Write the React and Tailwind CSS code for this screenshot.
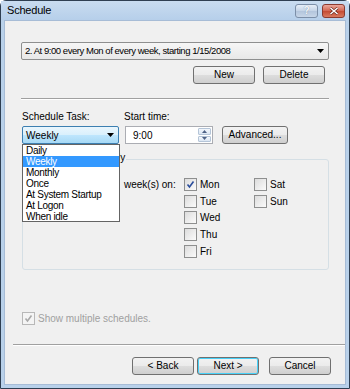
import React from "react";

const btn =
  "h-[18px] rounded-[3px] border border-[#707070] bg-[linear-gradient(#f2f2f2_0%,#ebebeb_50%,#dddddd_51%,#cfcfcf_100%)] text-[10px] text-black flex items-center justify-center leading-none";

function Check({ checked, disabled }) {
  return (
    <div
      className={
        "w-[13px] h-[13px] shrink-0 border flex items-center justify-center " +
        (disabled
          ? "border-[#b8b8b8] bg-[#f4f4f4]"
          : "border-[#8e8f8f] bg-[linear-gradient(135deg,#dcdcdc,#fbfbfb)]")
      }
    >
      {checked && (
        <svg width="9" height="9" viewBox="0 0 9 9">
          <path
            d="M1.5 4.5 L3.5 7 L7.5 1.5"
            fill="none"
            stroke={disabled ? "#a8a8a8" : "#2a4d9c"}
            strokeWidth="1.6"
          />
        </svg>
      )}
    </div>
  );
}

function Day({ label, checked }) {
  return (
    <div className="flex items-center h-[16.75px] gap-[3px]">
      <Check checked={checked} />
      <span>{label}</span>
    </div>
  );
}

export default function App() {
  const items = ["Daily", "Weekly", "Monthly", "Once", "At System Startup", "At Logon", "When idle"];
  return (
    <div
      className="w-[350px] h-[389px] bg-[#b9d1ea] border border-[#2f3f52] rounded-t-[6px] flex flex-col text-[10px] text-black"
      style={{ fontFamily: '"Liberation Sans", Arial, sans-serif' }}
    >
      {/* title bar */}
      <div className="h-[19px] shrink-0 flex items-center pl-[6px] pr-[4px] bg-[linear-gradient(#c9dcf0,#b6cfea)]">
        <span className="text-[11px] tracking-[-0.2px] text-black">Schedule</span>
        <div className="ml-auto flex gap-[4px] items-center">
          <div className="w-[23px] h-[14px] rounded-[3px] border border-[#7c8fa8] bg-[linear-gradient(#e6eef8,#c4d3e6_50%,#b3c5dc_51%,#c7d6e8)] flex items-center justify-center text-[10px] font-bold text-[#f4f7fb] leading-none" style={{ textShadow: "0 0 1px #6a7d95" }}>
            ?
          </div>
          <div className="w-[23px] h-[14px] rounded-[3px] border border-[#8b3a2f] bg-[linear-gradient(#eba89c,#d2644f_50%,#c44a32_51%,#d97a5f)] flex items-center justify-center">
            <svg width="10" height="8" viewBox="0 0 10 8">
              <path d="M1.5 1 L8.5 7 M8.5 1 L1.5 7" stroke="#5a1a10" strokeWidth="2.6" />
              <path d="M1.5 1 L8.5 7 M8.5 1 L1.5 7" stroke="#ffffff" strokeWidth="1.6" />
            </svg>
          </div>
        </div>
      </div>

      {/* client */}
      <div className="flex-1 mx-[3px] mb-[3px] bg-[#f0f0f0] border border-[#a7bcd6] flex flex-col relative">
        <div className="px-[16px] flex flex-col">
          {/* combo */}
          <div className="mt-[21px] h-[18px] border border-[#8e8f8f] rounded-[2px] bg-[linear-gradient(#f6f6f6,#e8e8e8)] flex items-center pl-[3px] pr-[4px]">
            <span className="text-[9.5px] tracking-[-0.45px]">2. At 9:00 every Mon of every week, starting 1/15/2008</span>
            <svg className="ml-auto" width="7" height="4" viewBox="0 0 7 4">
              <path d="M0 0 L7 0 L3.5 4 Z" fill="#000" />
            </svg>
          </div>

          {/* New / Delete */}
          <div className="mt-[6px] flex justify-end gap-[8px] pr-[4px]">
            <div className={btn + " w-[62px]"}>New</div>
            <div className={btn + " w-[62px]"}>Delete</div>
          </div>

          {/* separator */}
          <div className="mt-[14px] h-[2px] border-t border-[#a0a0a0] border-b border-b-white" />

          {/* labels */}
          <div className="mt-[10px] flex h-[13px] items-center">
            <span className="w-[103px] pl-[1px]">Schedule Task:</span>
            <span>Start time:</span>
          </div>

          {/* controls */}
          <div className="mt-[3px] flex items-center h-[18px]">
            <div className="w-[97px] h-[18px] ml-[1px] border border-[#3c7fb1] rounded-[2px] bg-[linear-gradient(#eaf6fd,#d9f0fc_50%,#bee6fd_51%,#a7d9f5)] flex items-center pl-[3px] pr-[4px]">
              <span>Weekly</span>
              <svg className="ml-auto" width="7" height="4" viewBox="0 0 7 4">
                <path d="M0 0 L7 0 L3.5 4 Z" fill="#000" />
              </svg>
            </div>
            <div className="ml-[6px] w-[88px] h-[18px] border border-[#abadb3] bg-white flex items-center">
              <span className="ml-[7px]">9:00</span>
              <div className="ml-auto mr-[1px] w-[13px] h-[14px] flex flex-col gap-[1px]">
                <div className="flex-1 border border-[#b5c5d8] rounded-[1px] bg-[linear-gradient(#f3f7fc,#dbe6f3)] flex items-center justify-center">
                  <svg width="5" height="3" viewBox="0 0 5 3"><path d="M0 3 L5 3 L2.5 0 Z" fill="#4d6185" /></svg>
                </div>
                <div className="flex-1 border border-[#b5c5d8] rounded-[1px] bg-[linear-gradient(#f3f7fc,#dbe6f3)] flex items-center justify-center">
                  <svg width="5" height="3" viewBox="0 0 5 3"><path d="M0 0 L5 0 L2.5 3 Z" fill="#4d6185" /></svg>
                </div>
              </div>
            </div>
            <div className={btn + " ml-[9px] w-[66px]"}>Advanced...</div>
          </div>

          {/* group box */}
          <div className="mt-[15px] ml-[1px] h-[111px] border border-[#d5dfe5] rounded-[3px] relative">
            <span className="absolute left-[1px] top-[-7px] bg-[#f0f0f0] px-[1px] leading-none">Schedule Task Weekly</span>
            <div className="flex mt-[16px]">
              <div className="w-[101px] flex items-start pl-[5px]">
                <div className="flex items-center h-[17px]">
                  <span>Every</span>
                  <div className="ml-[4px] w-[40px] h-[17px] bg-white border border-[#abadb3] flex items-center pl-[3px]">1</div>
                </div>
              </div>
              <div className="h-[17px] flex items-center w-[60px]">week(s) on:</div>
              <div className="w-[70px] flex flex-col">
                <Day label="Mon" checked />
                <Day label="Tue" />
                <Day label="Wed" />
                <Day label="Thu" />
                <Day label="Fri" />
              </div>
              <div className="flex flex-col">
                <Day label="Sat" />
                <Day label="Sun" />
              </div>
            </div>
          </div>

          {/* show multiple */}
          <div className="mt-[42px] ml-[1px] flex items-center gap-[3px] h-[13px] text-[#a0a0a0]">
            <Check checked disabled />
            <span>Show multiple schedules.</span>
          </div>
        </div>

        {/* bottom separator */}
        <div className="mt-[19px] ml-[8px] h-[2px] border-t border-[#a0a0a0] border-b border-b-white" />

        {/* bottom buttons */}
        <div className="mt-[11px] flex pl-[127px]">
          <div className={btn + " w-[62px]"}>&lt; Back</div>
          <div className={btn + " ml-[3px] w-[62px] border-[#3c7fb1] bg-[linear-gradient(#eaf6fd,#d9f0fc_50%,#bee6fd_51%,#a7d9f5)] shadow-[inset_0_0_0_1px_#48d1f8]"}>Next &gt;</div>
          <div className={btn + " ml-[10px] w-[62px]"}>Cancel</div>
        </div>

        {/* dropdown list overlay */}
        <div className="absolute left-[17px] top-[123px] w-[98px] h-[78px] bg-white border border-[#646464] flex flex-col">
          {items.map((it) => (
            <div
              key={it}
              className={
                "h-[11px] leading-[11px] pl-[3px] tracking-[-0.3px] " +
                (it === "Weekly" ? "bg-[#3399ff] text-white" : "")
              }
            >
              {it}
            </div>
          ))}
        </div>
      </div>
    </div>
  );
}
